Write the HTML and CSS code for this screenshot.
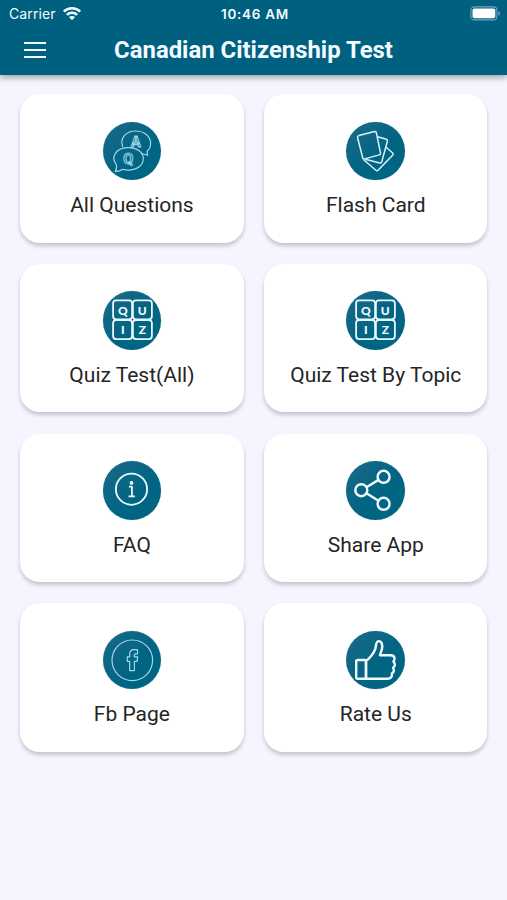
FILE: index.html
```
<!DOCTYPE html>
<html lang="en">
<head>
    <meta charset="UTF-8">
    <meta name="viewport" content="width=device-width, initial-scale=1.0">
    <title>Canadian Citizenship Test</title>
    <link rel="stylesheet" href="styles.css">
</head>
<body>
    <header class="header">
        <div class="status-bar">
            <div class="carrier">
                <span>Carrier</span>
                <svg class="wifi" viewBox="0 0 20 15">
                    <path d="M1.8 5.6C6.5 1.2 13.5 1.2 18.2 5.6M4.8 8.8C7.8 6 12.2 6 15.2 8.8" fill="none" stroke="#f2fbff" stroke-width="2.5"/>
                    <path d="M10 14.2L6.9 11.1C8.7 9.5 11.3 9.5 13.1 11.1Z" fill="#f2fbff"/>
                </svg>
            </div>
            <span class="time">10:46 AM</span>
            <svg class="battery" viewBox="0 0 31 15">
                <rect x="0.9" y="0.9" width="26" height="13" rx="3.5" fill="none" stroke="#6fa6bb" stroke-width="1.1"/>
                <rect x="2.5" y="2.5" width="22.8" height="9.8" rx="2" fill="#fff"/>
                <path d="M28.4 5.2C30.6 6 30.6 8.8 28.4 9.6Z" fill="#6fa6bb"/>
            </svg>
        </div>
        <div class="title-bar">
            <button class="menu" aria-label="Menu"><span></span><span></span><span></span></button>
            <h1>Canadian Citizenship Test</h1>
        </div>
    </header>

    <main class="cards">
        <a class="card">
            <svg class="icon thin" viewBox="0.7 0.7 58.6 58.6">
                <path d="M20.5 25.5C17 17 24 9.7 33 9.7C42 9.7 48.3 15 48.3 22C48.3 25.5 47 28.2 44.8 30L45.3 34L38.5 32"/>
                <path d="M14.2 43.5C8.5 37 12.5 26.5 25.5 26.3C35 26.3 41 30.8 41 37.2C41 44 35 48.8 26 48.8C23.5 48.8 22 48.6 20.5 48C18.5 49.5 16 50.2 13 50.3C14.2 48.3 14.6 46.5 14.2 43.5Z"/>
                <text class="bubble-letter" x="33.5" y="25.5">A</text>
                <text class="bubble-letter" x="26" y="42.4">Q</text>
            </svg>
            <span class="label">All Questions</span>
        </a>
        <a class="card">
            <svg class="icon" viewBox="0.7 0.7 58.6 58.6">
                <path d="M13.6 14.3L29.2 10.2Q30.6 9.9 31 11.2L35.2 31.5Q35.5 33.2 34 33.6L19.2 37.6Q17.8 38 17.4 36.5L12.2 16.2Q11.9 14.8 13.6 14.3Z"/>
                <path d="M32.3 15.4L41 17.9Q42.5 18.4 42.1 19.9L36.4 40.7Q36 42 34.5 41.7L20 38"/>
                <path d="M40.5 25.7L47.4 31.7Q48.4 32.6 47.5 33.7L32.8 49Q31.7 50.1 30.6 49L18.4 38.5"/>
            </svg>
            <span class="label">Flash Card</span>
        </a>
        <a class="card">
            <svg class="icon quiz" viewBox="0.7 0.7 58.6 58.6">
                <rect x="10.8" y="10" width="19" height="19" rx="3"/>
                <rect x="30.6" y="10" width="19" height="19" rx="3"/>
                <rect x="10.8" y="29.8" width="19" height="19" rx="3"/>
                <rect x="30.6" y="29.8" width="19" height="19" rx="3"/>
                <text x="20.5" y="24.6">Q</text>
                <text x="40" y="24.6">U</text>
                <text x="20.5" y="43.9">I</text>
                <text x="40" y="43.9">Z</text>
            </svg>
            <span class="label">Quiz Test(All)</span>
        </a>
        <a class="card">
            <svg class="icon quiz" viewBox="0.7 0.7 58.6 58.6">
                <rect x="10.8" y="10" width="19" height="19" rx="3"/>
                <rect x="30.6" y="10" width="19" height="19" rx="3"/>
                <rect x="10.8" y="29.8" width="19" height="19" rx="3"/>
                <rect x="30.6" y="29.8" width="19" height="19" rx="3"/>
                <text x="20.5" y="24.6">Q</text>
                <text x="40" y="24.6">U</text>
                <text x="20.5" y="43.9">I</text>
                <text x="40" y="43.9">Z</text>
            </svg>
            <span class="label">Quiz Test By Topic</span>
        </a>
        <a class="card">
            <svg class="icon info" viewBox="0.7 0.7 58.6 58.6">
                <circle cx="29.2" cy="28.9" r="15.6"/>
                <path d="M26.6 26.4H29.6V35.8M26.2 36H32.6"/>
                <circle class="dot" cx="29.2" cy="22.6" r="1.9"/>
            </svg>
            <span class="label">FAQ</span>
        </a>
        <a class="card">
            <svg class="icon bold" viewBox="0.7 0.7 58.6 58.6">
                <circle cx="16" cy="29.9" r="6"/>
                <circle cx="38.3" cy="16.5" r="6"/>
                <circle cx="38.3" cy="43.5" r="6"/>
                <path d="M21.2 26.9L33.2 19.6M21.2 32.9L33.2 40.4"/>
            </svg>
            <span class="label">Share App</span>
        </a>
        <a class="card">
            <svg class="icon thin" viewBox="0.7 0.7 58.6 58.6">
                <circle cx="30" cy="30" r="20.3"/>
                <path d="M27.4 40.3V31H25V26.6H27.4V23.6C27.4 20.8 29.2 19.4 31.8 19.4H35.2V23.6H33.2C32.3 23.6 32 24 32 24.8V26.6H35.4L34.8 31H32.1V40.3Z"/>
            </svg>
            <span class="label">Fb Page</span>
        </a>
        <a class="card">
            <svg class="icon bold" viewBox="0.7 0.7 58.6 58.6">
                <rect x="10.9" y="29.7" width="9.8" height="18.8" rx="1.5"/>
                <path d="M20.7 30.5C24 28.5 28.5 23 30 18.5C30.8 15.8 30.5 11 33.2 10.8C36.5 10.7 37.5 14.5 36.7 18.5C36.2 21 35.3 22.5 34.6 24.9H45.5C49.6 25 50.3 29 48 31.2C50.3 33 50 36.2 47.7 37.4C49.4 39.7 48.5 42.3 46.6 43C47.3 46.6 45 48.5 42.3 48.5H20.7Z"/>
            </svg>
            <span class="label">Rate Us</span>
        </a>
    </main>
</body>
</html>
```
FILE: styles.css
```
body {
    font-family: Roboto, sans-serif;
    margin: 0;
    min-height: 100vh;
    background: #f4f5ff;
    color: #252525;
}
.header {
    height: 74.5px;
    background: #006080;
    color: #f2fbff;
    box-shadow: 0 3px 6px rgba(0, 0, 0, 0.32);
}
.status-bar {
    display: grid;
    grid-template-columns: 1fr auto 1fr;
    align-items: center;
    height: 27px;
    padding: 0 6px 0 9px;
    font-family: Inter, sans-serif;
    font-size: 14px;
}
.carrier {
    display: flex;
    align-items: center;
    gap: 6px;
    letter-spacing: 0.1px;
}
.wifi {
    width: 20px;
    height: 15px;
}
.time {
    font-size: 13.5px;
    font-weight: 600;
    letter-spacing: 0.7px;
}
.battery {
    width: 31px;
    height: 15px;
    justify-self: end;
}
.title-bar {
    display: grid;
    grid-template-columns: 70px 1fr 70px;
    align-items: center;
    height: 46px;
}
.menu {
    display: flex;
    flex-direction: column;
    gap: 5px;
    width: 22px;
    margin-left: 24px;
    padding: 0;
    border: none;
    background: none;
}
.menu span {
    height: 2px;
    background: #f2fbff;
}
h1 {
    margin: 0;
    font-size: 23.9px;
    font-weight: 700;
    text-align: center;
    white-space: nowrap;
}
.cards {
    display: grid;
    grid-template-columns: 1fr 1fr;
    gap: 21.3px 20.6px;
    padding: 19.7px 19.6px 0 20.3px;
}
.card {
    display: flex;
    flex-direction: column;
    align-items: center;
    box-sizing: border-box;
    height: 148.4px;
    padding-top: 27.5px;
    background: #fff;
    border-radius: 20px;
    box-shadow: 0 3px 4px rgba(0, 0, 0, 0.2);
}
.icon {
    width: 58.6px;
    height: 58.6px;
    border-radius: 50%;
    background: linear-gradient(135deg, #1b6a87, #006483 60%);
    box-shadow: 0 0 1px rgba(0, 96, 128, 0.4);
    fill: none;
    stroke: #d8f1fa;
    stroke-width: 1.5;
    stroke-linejoin: round;
}
.icon.thin {
    stroke: #a0d8eb;
    stroke-width: 1.2;
}
.icon.bold {
    stroke: #f0fbff;
    stroke-width: 2.4;
}
.icon.quiz,
.icon.info {
    stroke: #e9f9ff;
    stroke-width: 1.8;
}
.icon text {
    font-family: Lato, sans-serif;
    font-size: 12px;
    font-weight: 900;
    text-anchor: middle;
    fill: #f0fbff;
    stroke: none;
}
.icon .bubble-letter {
    font-family: Roboto, sans-serif;
    font-size: 14.5px;
    font-weight: 700;
    fill: none;
    stroke: #a0d8eb;
    stroke-width: 1;
}
.icon .dot {
    fill: #e9f9ff;
    stroke: none;
}
.label {
    margin-top: 12px;
    font-size: 21px;
    line-height: 26px;
    white-space: nowrap;
}
```
